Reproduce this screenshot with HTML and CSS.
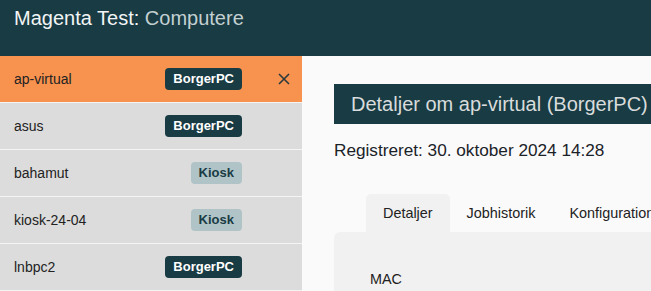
FILE: index.html
```html
<!DOCTYPE html>
<html lang="da">
<head>
    <meta charset="UTF-8">
    <meta name="viewport" content="width=device-width, initial-scale=1.0">
    <title>Magenta Test: Computere</title>
    <link rel="stylesheet" href="styles.css">
</head>
<body>
    <header class="topbar">
        <h1><span class="site">Magenta Test:</span> <span class="section">Computere</span></h1>
    </header>

    <div class="layout">
        <nav class="sidebar">
            <ul class="pc-list">
                <li class="pc-item active">
                    <span class="pc-name">ap-virtual</span>
                    <span class="badge badge-borger">BorgerPC</span>
                    <span class="close">
                        <svg width="12" height="12" viewBox="0 0 12 12"><path d="M1 1 L11 11 M11 1 L1 11" stroke="#2b3a3d" stroke-width="1.6" fill="none"/></svg>
                    </span>
                </li>
                <li class="pc-item">
                    <span class="pc-name">asus</span>
                    <span class="badge badge-borger">BorgerPC</span>
                    <span class="close"></span>
                </li>
                <li class="pc-item">
                    <span class="pc-name">bahamut</span>
                    <span class="badge badge-kiosk">Kiosk</span>
                    <span class="close"></span>
                </li>
                <li class="pc-item">
                    <span class="pc-name">kiosk-24-04</span>
                    <span class="badge badge-kiosk">Kiosk</span>
                    <span class="close"></span>
                </li>
                <li class="pc-item">
                    <span class="pc-name">lnbpc2</span>
                    <span class="badge badge-borger">BorgerPC</span>
                    <span class="close"></span>
                </li>
            </ul>
        </nav>

        <main class="content">
            <h2 class="detail-title">Detaljer om ap-virtual (BorgerPC)</h2>
            <p class="registered">Registreret: 30. oktober 2024 14:28</p>

            <div class="tabs">
                <div class="tab active">Detaljer</div>
                <div class="tab">Jobhistorik</div>
                <div class="tab">Konfiguration</div>
            </div>
            <div class="tab-panel">
                <div class="field-label">MAC</div>
            </div>
        </main>
    </div>
</body>
</html>
```

FILE: styles.css
```css
body {
    margin: 0;
    font-family: 'Liberation Sans', Arial, sans-serif;
    background-color: #fafafa;
    color: #222;
    overflow: hidden;
}

.topbar {
    background-color: #193b43;
    height: 56px;
    padding: 6px 14px 0;
    box-sizing: border-box;
}

.topbar h1 {
    margin: 0;
    font-size: 20px;
    font-weight: normal;
    line-height: 24px;
}

.site {
    color: #f2f5f5;
}

.section {
    color: #c3d0d2;
}

.layout {
    display: flex;
    width: 1100px;
}

.sidebar {
    width: 302px;
    flex-shrink: 0;
    background-color: #dcdcdc;
    min-height: 300px;
}

.pc-list {
    list-style: none;
    margin: 0;
    padding: 0;
}

.pc-item {
    display: flex;
    align-items: center;
    height: 46px;
    padding-left: 14px;
    border-bottom: 1px solid #f4f4f4;
    font-size: 14px;
    color: #222;
}

.pc-item.active {
    background-color: #f7924f;
}

.pc-name {
    flex: 1;
}

.badge {
    font-size: 13px;
    font-weight: bold;
    line-height: 22px;
    padding: 0 8px;
    border-radius: 4px;
}

.badge-borger {
    background-color: #193b43;
    color: #fff;
}

.badge-kiosk {
    background-color: #b0c4c7;
    color: #193b43;
}

.close {
    width: 60px;
    display: flex;
    justify-content: flex-end;
    padding-right: 12px;
    box-sizing: border-box;
}

.content {
    flex: 1;
    padding: 28px 0 0 32px;
}

.detail-title {
    margin: 0;
    height: 40px;
    line-height: 40px;
    padding-left: 17px;
    background-color: #193b43;
    color: #d8dcdc;
    font-size: 20px;
    font-weight: normal;
}

.registered {
    margin: 16px 0 0;
    font-size: 17.2px;
    line-height: 20px;
    color: #1a2228;
}

.tabs {
    display: flex;
    margin: 34px 0 0 32px;
}

.tab {
    padding: 0 17px;
    height: 38px;
    line-height: 38px;
    font-size: 14.4px;
    border-radius: 5px 5px 0 0;
}

.tab.active {
    background-color: #f1f1f1;
}

.tab-panel {
    background-color: #f1f1f1;
    border-radius: 6px;
    padding: 39px 36px;
    min-height: 200px;
}

.field-label {
    font-size: 14.4px;
}
```
